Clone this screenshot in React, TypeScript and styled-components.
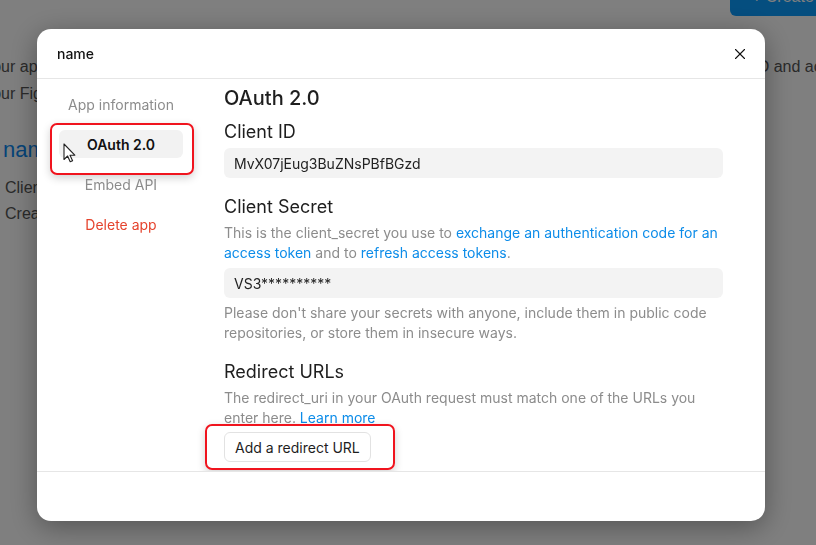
import styled, { createGlobalStyle } from 'styled-components';
import { X } from 'lucide-react';

const GlobalStyle = createGlobalStyle`
  html, body {
    margin: 0;
    padding: 0;
    overflow: hidden;
    background: #fff;
  }
  * {
    box-sizing: border-box;
  }
`;

const Page = styled.div`
  width: 860px;
  margin: -22px 0 0 -17px;
  font-family: 'Liberation Sans', Arial, sans-serif;
  font-size: 16px;
  color: #555;
  overflow: hidden;
`;

const TopBar = styled.div`
  display: flex;
  justify-content: flex-end;
`;

const CreateButton = styled.button`
  width: 113px;
  height: 38px;
  border: none;
  border-radius: 6px;
  background: #0b9cff;
  color: #fff;
  font: inherit;
  text-align: left;
  white-space: nowrap;
  padding-left: 22px;
`;

const Intro = styled.p`
  margin: 37px 0 0;
  line-height: 27px;
  white-space: nowrap;
`;

const AppName = styled.h2`
  margin: 30px 0 0 20px;
  font-size: 22px;
  font-weight: 400;
  color: #0b88f0;
`;

const Bullets = styled.ul`
  margin: 12px 0 0;
  padding-left: 22px;
  list-style: none;
  line-height: 26px;
`;

const Overlay = styled.div`
  position: fixed;
  inset: 0;
  background: rgba(0, 0, 0, 0.5);
  display: flex;
  align-items: flex-start;
  padding: 29px 0 0 37px;
  font-family: Inter, 'Noto Sans', sans-serif;
`;

const Modal = styled.div`
  width: 728px;
  height: 492px;
  background: #fff;
  border-radius: 14px;
  box-shadow: 0 6px 28px rgba(0, 0, 0, 0.35);
  display: flex;
  flex-direction: column;
  overflow: hidden;
`;

const Header = styled.div`
  height: 50px;
  flex: none;
  display: flex;
  align-items: center;
  justify-content: space-between;
  padding: 0 16px 0 20px;
  border-bottom: 1px solid #e6e6e6;
  font-size: 14px;
  font-weight: 500;
  color: #111;
`;

const CloseButton = styled.button`
  border: none;
  background: none;
  padding: 0;
  display: flex;
  color: #111;
`;

const Body = styled.div`
  height: 393px;
  flex: none;
  display: flex;
  overflow: hidden;
  border-bottom: 1px solid #e6e6e6;
`;

const Sidebar = styled.nav`
  width: 168px;
  flex: none;
  padding: 11px 22px;
  display: flex;
  flex-direction: column;
  gap: 12px;
`;

const NavItem = styled.div<{ $active?: boolean; $danger?: boolean }>`
  position: relative;
  height: 28px;
  border-radius: 6px;
  display: flex;
  align-items: center;
  justify-content: center;
  font-size: 14px;
  background: ${(p) => (p.$active ? '#f2f2f2' : 'transparent')};
  font-weight: ${(p) => (p.$active ? 600 : 400)};
  color: ${(p) => (p.$danger ? '#e5432d' : p.$active ? '#111' : '#8c8c8c')};
`;

const Highlight = styled.span<{ $t: number; $r: number; $b: number; $l: number }>`
  position: absolute;
  top: ${(p) => -p.$t}px;
  right: ${(p) => -p.$r}px;
  bottom: ${(p) => -p.$b}px;
  left: ${(p) => -p.$l}px;
  border: 2px solid #f0141e;
  border-radius: 7px;
  box-shadow: 0 3px 8px rgba(0, 0, 0, 0.18);
  pointer-events: none;
`;

const Cursor = styled.svg`
  position: absolute;
  left: 4px;
  top: 13px;
`;

const Content = styled.div`
  flex: 1;
  padding: 7px 42px 0 19px;
  display: flex;
  flex-direction: column;
`;

const Heading = styled.h1`
  margin: 0 0 10px;
  font-size: 20px;
  line-height: 24px;
  font-weight: 500;
  color: #1e1e1e;
`;

const Section = styled.section`
  display: flex;
  flex-direction: column;
  gap: 5px;
  & + & {
    margin-top: 17px;
  }
`;

const Title = styled.h3`
  margin: 0 0 -1px;
  font-size: 18px;
  line-height: 24px;
  font-weight: 400;
  color: #1e1e1e;
`;

const Field = styled.div`
  height: 30px;
  border-radius: 6px;
  background: #f3f3f3;
  display: flex;
  align-items: center;
  padding: 0 10px;
  font-size: 14px;
  color: #222;
`;

const Note = styled.p`
  margin: 0;
  font-size: 14px;
  line-height: 20px;
  color: #8c8c8c;
`;

const TextLink = styled.a`
  color: #0c8ce9;
  text-decoration: none;
`;

const AddButton = styled.button`
  position: relative;
  align-self: flex-start;
  height: 30px;
  margin-top: -1px;
  padding: 0 10px;
  border: 1px solid #e2e2e2;
  border-radius: 6px;
  background: #fff;
  font-family: inherit;
  font-size: 14px;
  color: #1e1e1e;
`;

const Footer = styled.div`
  flex: 1;
`;

export default function App() {
  return (
    <>
      <GlobalStyle />
      <Page>
        <TopBar>
          <CreateButton>+ Create app</CreateButton>
        </TopBar>
        <Intro>
          Your apps let you build on the Figma REST API with OAuth 2.0. Create a new app here to simply get a client ID and access tokens.
          <br />
          Your Figma account needs to be verified before creating an app.
        </Intro>
        <AppName>name</AppName>
        <Bullets>
          <li>Client ID: MvX07jEug3BuZNsPBfBGzd</li>
          <li>Created just now</li>
        </Bullets>
      </Page>

      <Overlay>
        <Modal>
          <Header>
            <span>name</span>
            <CloseButton aria-label="Close">
              <X size={18} strokeWidth={1.5} />
            </CloseButton>
          </Header>
          <Body>
            <Sidebar>
              <NavItem>App information</NavItem>
              <NavItem $active>
                OAuth 2.0
                <Highlight $t={7} $r={11} $b={17} $l={9} />
                <Cursor width="13" height="20" viewBox="0 0 13 20">
                  <path
                    d="M1 1 L1 16.5 L4.6 13 L7.2 18.8 L9.6 17.8 L7 12.2 L11.8 12.2 Z"
                    fill="#fff"
                    stroke="#222"
                    strokeWidth="1.1"
                    strokeLinejoin="round"
                  />
                </Cursor>
              </NavItem>
              <NavItem>Embed API</NavItem>
              <NavItem $danger>Delete app</NavItem>
            </Sidebar>
            <Content>
              <Heading>OAuth 2.0</Heading>
              <Section>
                <Title>Client ID</Title>
                <Field>MvX07jEug3BuZNsPBfBGzd</Field>
              </Section>
              <Section>
                <Title>Client Secret</Title>
                <Note>
                  This is the client_secret you use to{' '}
                  <TextLink href="#">exchange an authentication code for an access token</TextLink> and to{' '}
                  <TextLink href="#">refresh access tokens</TextLink>.
                </Note>
                <Field>VS3**********</Field>
                <Note>
                  Please don't share your secrets with anyone, include them in public code repositories, or store them
                  in insecure ways.
                </Note>
              </Section>
              <Section>
                <Title>Redirect URLs</Title>
                <Note>
                  The redirect_uri in your OAuth request must match one of the URLs you enter here.{' '}
                  <TextLink href="#">Learn more</TextLink>
                </Note>
                <AddButton>
                  Add a redirect URL
                  <Highlight $t={9} $r={25} $b={9} $l={20} />
                </AddButton>
              </Section>
            </Content>
          </Body>
          <Footer />
        </Modal>
      </Overlay>
    </>
  );
}
